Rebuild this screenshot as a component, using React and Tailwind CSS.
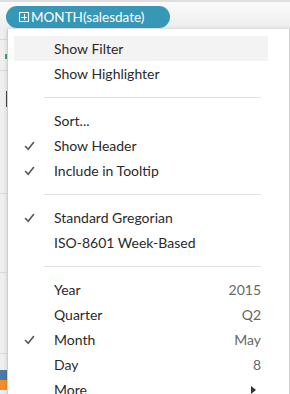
import React from "react";

const Check = () => (
  <svg width="11" height="10" viewBox="0 0 11 10" className="block">
    <path d="M1.5 5.5 L4.2 8.3 L9.5 1.5" fill="none" stroke="#555" strokeWidth="1.6" strokeLinecap="round" strokeLinejoin="round" />
  </svg>
);

const Row = ({ label, checked, value, highlight, arrow }) => (
  <div className={`flex items-center h-[25px] ${highlight ? "bg-[#f3f3f3]" : ""}`}>
    <div className="w-[40px] pl-[10px] flex items-center">{checked ? <Check /> : null}</div>
    <div className="flex-1 text-[#2a2a2a]">{label}</div>
    {value ? <div className="pr-[7px] text-[#666]">{value}</div> : null}
    {arrow ? (
      <div className="pr-[12px]">
        <svg width="5" height="8" viewBox="0 0 5 8" className="block">
          <path d="M0 0 L5 4 L0 8 Z" fill="#333" />
        </svg>
      </div>
    ) : null}
  </div>
);

const Sep = () => (
  <div className="pt-[11px] pb-[10px] pl-[30px] pr-[7px]">
    <div className="h-px bg-[#e2e2e2]" />
  </div>
);

export default function App() {
  return (
    <div
      className="w-[290px] h-[394px] overflow-hidden bg-[#f2f2f2] flex flex-col text-[14px]"
      style={{ fontFamily: "Lato, 'Open Sans', sans-serif" }}
    >
      <div className="h-[29px] shrink-0 border-t-2 border-[#dedede] bg-gradient-to-b from-[#fbfbfb] to-[#ededed] pl-[6px] pt-[4px]">
        <div className="h-[22px] w-[164px] rounded-full bg-[#3797b7] flex items-center pl-[13px] text-white text-[13.5px]">
          <div className="w-[10px] h-[10px] border border-white flex items-center justify-center mr-[2px] relative">
            <div className="absolute w-[6px] h-px bg-white" />
            <div className="absolute h-[6px] w-px bg-white" />
          </div>
          <span>MONTH(salesdate)</span>
        </div>
      </div>
      <div className="flex flex-1">
        <div className="w-[7px] shrink-0 flex flex-col bg-[#efefef]">
          <div className="h-[10px]" />
          <div className="h-px bg-[#d8d8d8]" />
          <div className="h-[14px]" />
          <div className="h-[5px] w-[2px] self-end bg-[#3aa66a]" />
          <div className="h-[11px]" />
          <div className="h-px bg-[#d8d8d8]" />
          <div className="h-[20px]" />
          <div className="h-[16px] w-[1px] self-end bg-[#444]" />
          <div className="h-[86px]" />
          <div className="h-px bg-[#dcdcdc]" />
          <div className="h-[78px]" />
          <div className="h-px bg-[#dcdcdc]" />
          <div className="h-[80px]" />
          <div className="h-px bg-[#dcdcdc]" />
          <div className="h-[16px]" />
          <div className="h-[10px] bg-[#4e79a7]" />
          <div className="h-[10px] bg-[#f28e2b]" />
        </div>
        <div className="flex-1 bg-white border-l border-r border-[#d0d0d0] shadow-[0_0_4px_rgba(0,0,0,0.15)] pt-[7px] pl-[6px] pr-[21px]">
          <Row label="Show Filter" highlight />
          <Row label="Show Highlighter" />
          <Sep />
          <Row label="Sort..." />
          <Row label="Show Header" checked />
          <Row label="Include in Tooltip" checked />
          <Sep />
          <Row label="Standard Gregorian" checked />
          <Row label="ISO-8601 Week-Based" />
          <Sep />
          <Row label="Year" value="2015" />
          <Row label="Quarter" value="Q2" />
          <Row label="Month" value="May" checked />
          <Row label="Day" value="8" />
          <Row label="More" arrow />
        </div>
      </div>
    </div>
  );
}
